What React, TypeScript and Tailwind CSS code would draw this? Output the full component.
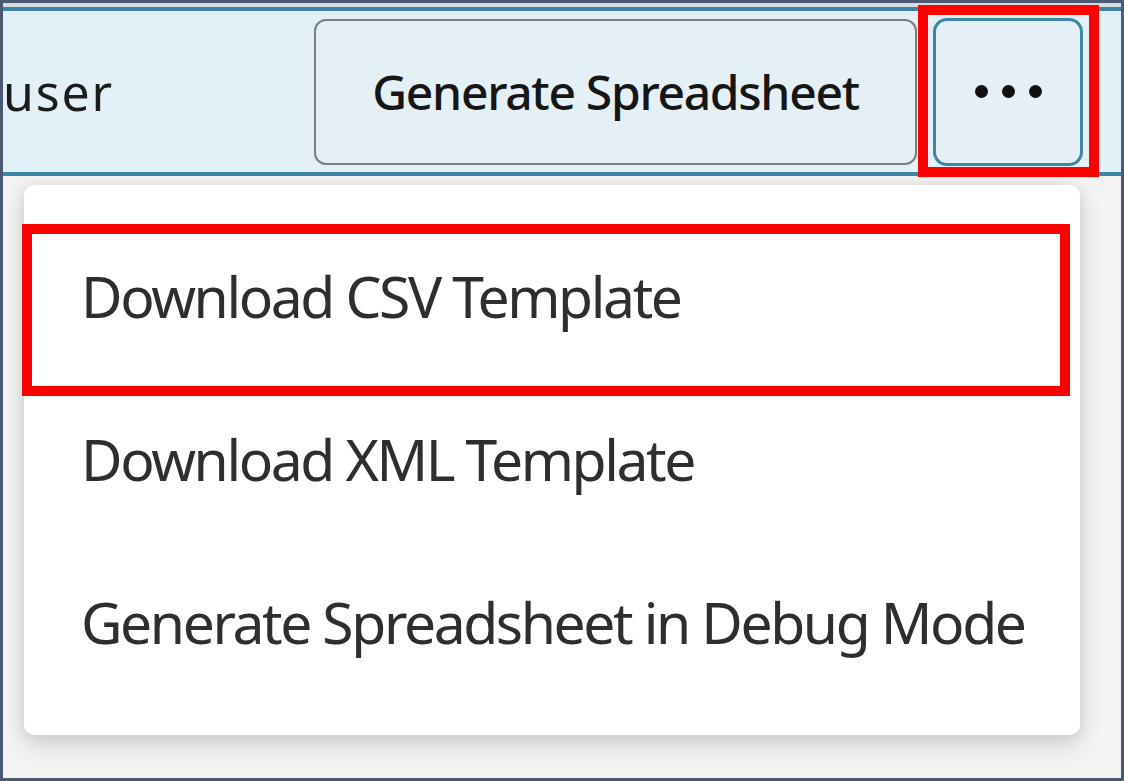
const font = { fontFamily: '"Noto Sans", "Open Sans", sans-serif' };

const items = [
  "Download CSV Template",
  "Download XML Template",
  "Generate Spreadsheet in Debug Mode",
];

export default function App() {
  return (
    <div
      style={font}
      className="relative w-[1124px] h-[781px] overflow-hidden border-[3px] border-[#4a5a72] bg-[#f4f3f1] flex flex-col"
    >
      {/* thin strip above the header */}
      <div className="h-[4px] bg-[#d6dce0]" />

      {/* toolbar */}
      <div className="h-[169px] border-y-[4px] border-[#3b86a5] bg-[#e4f0f7] flex items-center pr-[38px]">
        <span className="text-[50px] leading-none text-[#1b1b1b] tracking-[1.8px] whitespace-nowrap">user</span>
        <div className="flex-1" />
        <button className="w-[603px] h-[146px] rounded-[12px] border-2 border-[#7c7c7c] bg-[#e5f0f6] text-[48px] font-medium tracking-[-1.3px] text-[#161616] whitespace-nowrap flex items-center justify-center">
          Generate Spreadsheet
        </button>
        <button className="ml-[16px] w-[150px] h-[148px] rounded-[14px] border-[3px] border-[#3d87a6] bg-[#e5f0f6] flex items-center justify-center gap-[14px]">
          <span className="w-[13px] h-[13px] rounded-full bg-[#111]" />
          <span className="w-[13px] h-[13px] rounded-full bg-[#111]" />
          <span className="w-[13px] h-[13px] rounded-full bg-[#111]" />
        </button>
      </div>

      {/* dropdown menu */}
      <div className="mt-[9px] ml-[21px] w-[1056px] h-[550px] rounded-[10px] bg-white shadow-[0_10px_22px_rgba(0,0,0,0.14),0_0_14px_rgba(0,0,0,0.08)] pt-[30px]">
        {items.map((label) => (
          <div
            key={label}
            className="h-[163px] flex items-center pl-[57px] text-[57px] text-[#2e2e2e] tracking-[-2.4px] whitespace-nowrap"
          >
            {label}
          </div>
        ))}
      </div>

      {/* annotation boxes */}
      <div className="absolute left-[915px] top-[2px] w-[181px] h-[172px] border-[10px] border-[#ff0000]" />
      <div className="absolute left-[19px] top-[221px] w-[1048px] h-[172px] border-[10px] border-[#ff0000]" />
    </div>
  );
}
